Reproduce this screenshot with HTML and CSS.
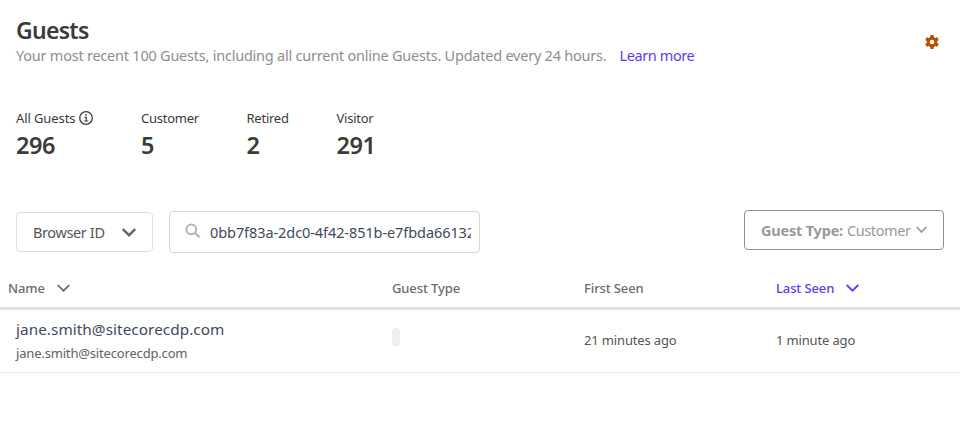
FILE: index.html
```html
<!DOCTYPE html>
<html lang="en">
<head>
<meta charset="utf-8">
<title>Guests</title>
<link rel="stylesheet" href="styles.css">
</head>
<body>
<header class="page-header">
  <div>
    <h1 class="title">Guests</h1>
    <p class="subtitle"><span class="summary">Your most recent 100 Guests, including all current online Guests. Updated every 24 hours.</span><a class="learn" href="#">Learn more</a></p>
  </div>
  <button class="settings" aria-label="Settings">
    <svg width="14" height="14" viewBox="0 0 14 14"><g fill="#b95000"><circle cx="7" cy="7" r="5.3"/><rect x="5.2" y="0" width="3.6" height="14" rx="1"/><rect x="5.2" y="0" width="3.6" height="14" rx="1" transform="rotate(60 7 7)"/><rect x="5.2" y="0" width="3.6" height="14" rx="1" transform="rotate(120 7 7)"/></g><circle cx="7" cy="7" r="2.3" fill="#fff"/></svg>
  </button>
</header>
<section class="stats">
  <div class="stat stat-all"><div class="stat-label"><span>All Guests</span><svg width="14" height="14" viewBox="0 0 14 14" fill="none" stroke="#3b3b3b"><circle cx="7" cy="7" r="6.3" stroke-width="1.3"/><path d="M5.5 6.3H7.2V10M5.2 10H9" stroke-width="1.2"/><path d="M6.2 4H7.8" stroke-width="1.5"/></svg></div><div class="stat-value">296</div></div>
  <div class="stat stat-customer"><div class="stat-label"><span>Customer</span></div><div class="stat-value">5</div></div>
  <div class="stat stat-retired"><div class="stat-label"><span>Retired</span></div><div class="stat-value">2</div></div>
  <div class="stat"><div class="stat-label"><span>Visitor</span></div><div class="stat-value">291</div></div>
</section>
<section class="filters">
  <button class="select"><span>Browser ID</span><svg width="14" height="9" viewBox="0 0 14 9" fill="none" stroke="#666" stroke-width="2.4"><path d="M.8 1 7 7.2 13.2 1"/></svg></button>
  <div class="search"><svg width="16" height="16" viewBox="0 0 16 16" fill="none" stroke="#b3b3b3" stroke-width="2"><circle cx="6.3" cy="6.3" r="4.9"/><path d="M10 10l4.6 4.3"/></svg><div class="query">0bb7f83a-2dc0-4f42-851b-e7fbda66132</div></div>
  <button class="type-filter"><b>Guest Type:</b><span>Customer</span><svg width="11" height="8" viewBox="0 0 11 8" fill="none" stroke="#999" stroke-width="1.8"><path d="M.7 1 5.5 6 10.3 1"/></svg></button>
</section>
<section class="table">
  <div class="row head">
    <div><span>Name</span><svg width="13" height="8" viewBox="0 0 13 8" fill="none" stroke="#666" stroke-width="1.7"><path d="M.7 1 6.5 6.7 12.3 1"/></svg></div>
    <div><span>Guest Type</span></div>
    <div><span>First Seen</span></div>
    <div class="active"><span>Last Seen</span><svg width="13" height="8" viewBox="0 0 13 8" fill="none" stroke="#6437f5" stroke-width="1.8"><path d="M.7 1 6.5 6.7 12.3 1"/></svg></div>
  </div>
  <div class="row entry">
    <div class="person"><div class="primary">jane.smith@sitecorecdp.com</div><div class="secondary">jane.smith@sitecorecdp.com</div></div>
    <div class="badge-cell"><span class="badge"></span></div>
    <div class="time">21 minutes ago</div>
    <div class="time">1 minute ago</div>
  </div>
</section>
</body>
</html>
```
FILE: styles.css
```css
* { box-sizing: border-box; }
body { margin: 0; background: #fff; color: #3b3b3b; font-family: "Noto Sans", sans-serif; overflow: hidden; }
button { font: inherit; background: #fff; padding: 0; margin: 0; }
svg { display: block; flex: none; }
.page-header { display: flex; justify-content: space-between; height: 84px; padding: 14px 21px 0 16px; }
.title { margin: 0; padding-top: 1px; font-size: 23px; line-height: 30px; font-weight: 600; letter-spacing: -.7px; }
.subtitle { margin: 0; display: flex; font-size: 14.5px; line-height: 20px; color: #8e8e8e; white-space: nowrap; }
.summary { letter-spacing: -.23px; width: 603.5px; }
.learn { color: #6437f5; text-decoration: none; letter-spacing: -.4px; }
.settings { border: 0; height: 14px; margin-top: 21px; }
.stats { display: flex; height: 126px; padding: 24px 16px 0; }
.stat-all { width: 125px; }
.stat-customer { width: 105.5px; }
.stat-retired { width: 90px; }
.stat-label { display: flex; align-items: center; gap: 4px; font-size: 13px; line-height: 20px; letter-spacing: -.24px; white-space: nowrap; }
.stat-all .stat-label { letter-spacing: -.1px; }
.stat-value { font-size: 23.5px; line-height: 35px; font-weight: 560; letter-spacing: -.4px; }
.filters { display: flex; height: 58px; padding: 0 16px; font-size: 14.5px; white-space: nowrap; }
.select { display: flex; align-items: center; justify-content: space-between; width: 137px; height: 40px; margin-top: 2px; padding: 0 16px; border: 1px solid #e0e0e0; border-radius: 4px; color: #555; letter-spacing: -.38px; }
.search { display: flex; width: 311px; height: 42px; margin: 1px 0 0 16px; padding: 0 8px 0 15px; border: 1px solid #d5d5d5; border-radius: 4px; color: #41495a; }
.search svg { margin: 11px 9px 0 0; }
.query { flex: 1; min-width: 0; overflow: hidden; line-height: 40px; letter-spacing: -.08px; }
.type-filter { display: flex; align-items: center; width: 200px; height: 40px; margin-left: auto; padding-left: 16px; border: 1px solid #8f8f8f; border-radius: 4px; color: #999; }
.type-filter b { margin-right: 4px; letter-spacing: -.2px; }
.type-filter span { letter-spacing: -.4px; }
.type-filter svg { margin-left: 5px; }
.row { display: grid; grid-template-columns: 384px 192px 192px 192px; white-space: nowrap; }
.head { height: 42px; font-size: 13px; font-weight: 500; color: #6c6c6c; border-bottom: 3px solid #e0e0e0; letter-spacing: -.12px; }
.head > div { padding-left: 8px; display: flex; align-items: center; height: 40px; }
.head svg { margin-left: 12px; }
.head .active { color: #6437f5; }
.entry { height: 63px; border-bottom: 1px solid #e6e6e6; }
.person { padding-left: 16px; }
.primary { font-size: 15.3px; line-height: 22px; margin-top: 8px; color: #41495a; letter-spacing: .06px; }
.secondary { font-size: 13px; line-height: 18px; margin-top: 4px; color: #626262; letter-spacing: -.17px; }
.badge-cell { padding: 18px 0 0 8px; }
.badge { display: block; width: 8px; height: 18px; border-radius: 3px; background: #efefef; }
.time { padding-left: 8px; font-size: 13px; line-height: 61px; color: #555; letter-spacing: -.15px; }
```
